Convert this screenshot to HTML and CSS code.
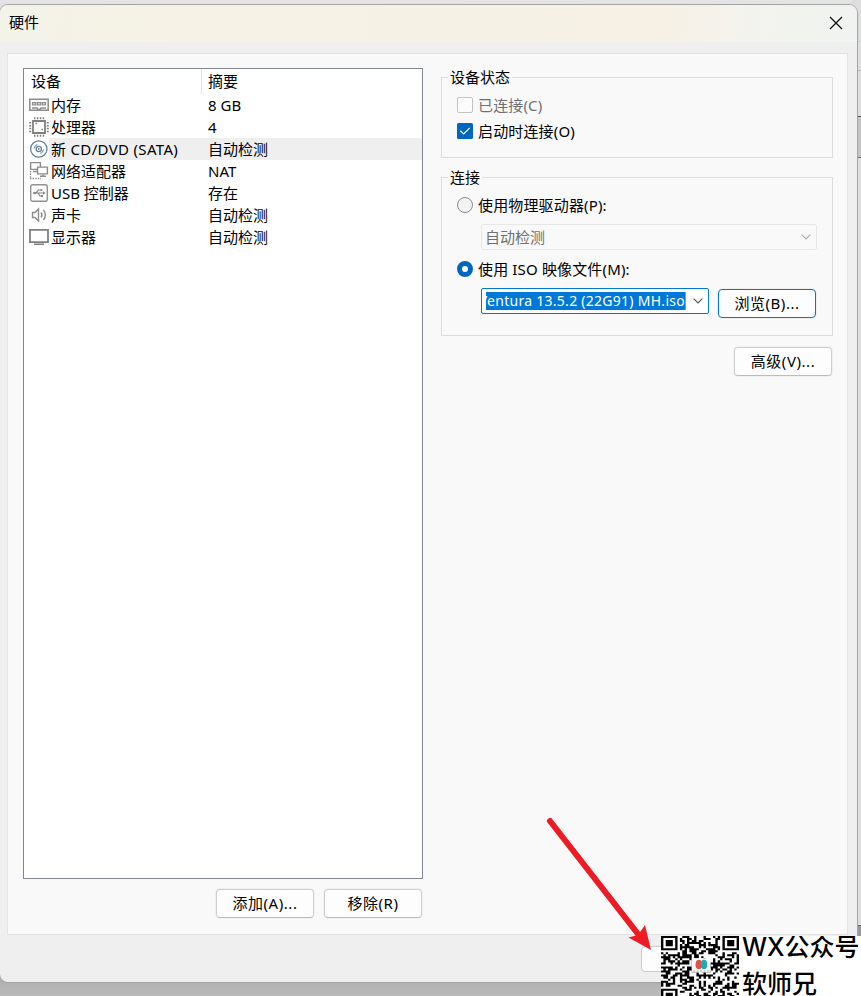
FILE: index.html
```
<!DOCTYPE html>
<html lang="zh-CN">
<head>
<meta charset="utf-8">
<title>硬件</title>
<link rel="stylesheet" href="styles.css">
</head>
<body>
<main class="dialog">
  <header class="titlebar">
    <h1>硬件</h1>
    <svg class="close" width="14" height="14" viewBox="0 0 14 14"><path d="M1 1L13 13M13 1L1 13" stroke="#111" stroke-width="1.3"/></svg>
  </header>
  <section class="panel">
    <div class="left">
      <div class="list">
        <div class="head"><span class="c1">设备</span><span class="c2">摘要</span></div>
        <div class="row"><svg class="ico" width="20" height="22" viewBox="0 0 20 22"><path d="M.8 5.3H19.2V16.2H.8ZM3 14H8L9 15.5H11L12 14H17" fill="none" stroke="#8c8c8c" stroke-width="1.5"/><path d="M3.5 8.5H6.7V11H3.5ZM8.4 8.5H11.6V11H8.4ZM13.3 8.5H16.5V11H13.3Z" fill="#ccc" stroke="#8c8c8c" stroke-width="1.2"/></svg><span class="name">内存</span><span class="val">8 GB</span></div>
        <div class="row"><svg class="ico" width="20" height="22" viewBox="0 0 20 22"><path d="M4 5H16V17H4Z" fill="none" stroke="#808080" stroke-width="1.8"/><path d="M5 2.2H16M5 19.8H16" stroke="#808080" stroke-width="2" stroke-dasharray="1.5 1.4"/><path d="M1.2 6V17M18.8 6V17" stroke="#808080" stroke-width="2" stroke-dasharray="1.5 1.4"/><path d="M6.5 7.5H8M12.5 13.500H14" stroke="#808080" stroke-width="1.5"/></svg><span class="name">处理器</span><span class="val">4</span></div>
        <div class="row selected"><svg class="ico" width="20" height="22" viewBox="0 0 20 22"><g fill="none" stroke="#64839d" stroke-width="1.3"><circle cx="9.800" cy="11" r="8.200"/><circle cx="9.800" cy="11" r="2.600"/><path d="M5.200 10.500A4.800 4.800 0 0 1 8.500 6.500M14.400 11.500A4.800 4.800 0 0 1 11.100 15.500" stroke="#7c9eb9"/></g><circle cx="9.800" cy="11" r=".9" fill="#64839d"/></svg><span class="name wide">新 CD/DVD (SATA)</span><span class="val">自动检测</span></div>
        <div class="row"><svg class="ico" width="20" height="22" viewBox="0 0 20 22"><g fill="#fff" stroke="#8c8c8c" stroke-width="1.4"><path d="M1.600 2.600H11.400V9.400H1.600Z"/><path d="M4 11.500H8M11 16.200H17M14 14.500V16"/><path d="M8.600 7.100H18.400V13.900H8.600Z"/><path d="M1.500 11V17.500M1 18.500H12" stroke-dasharray="1.4 1.2"/></g></svg><span class="name">网络适配器</span><span class="val">NAT</span></div>
        <div class="row"><svg class="ico" width="20" height="22" viewBox="0 0 20 22"><rect x="1.700" y="2.700" width="16.600" height="16.600" rx="2" fill="none" stroke="#929292" stroke-width="1.4"/><path d="M4.500 11H15.500M7 11L9.500 8H12M9 11L11 14H13" fill="none" stroke="#858585" stroke-width="1.2"/><circle cx="5.500" cy="11" r="1.300" fill="#858585"/><path d="M14 9.200L16.500 11L14 12.800Z" fill="#858585"/><circle cx="12.500" cy="8" r="1" fill="#858585"/><path d="M12 13H14V15H12Z" fill="#858585"/></svg><span class="name">USB 控制器</span><span class="val">存在</span></div>
        <div class="row"><svg class="ico" width="20" height="22" viewBox="0 0 20 22"><path d="M3.500 8.500H6L9.500 5V17L6 13.500H3.500ZM12 8.500Q14 11 12 13.500M14.500 6Q18.200 11 14.500 16" fill="none" stroke="#8c8c8c" stroke-width="1.4"/></svg><span class="name">声卡</span><span class="val">自动检测</span></div>
        <div class="row"><svg class="ico" width="20" height="22" viewBox="0 0 20 22"><path d="M1 3.800H19V16.200H1Z" fill="none" stroke="#808080" stroke-width="1.8"/><path d="M5 18.300H15" stroke="#808080" stroke-width="1.6"/></svg><span class="name">显示器</span><span class="val">自动检测</span></div>
      </div>
      <div class="actions"><button>添加(A)...</button><button>移除(R)</button></div>
    </div>
    <div class="right">
      <fieldset class="status">
        <legend>设备状态</legend>
        <label class="opt disabled"><span class="box"></span>已连接(C)</label>
        <label class="opt"><svg width="16" height="16" viewBox="0 0 16 16"><rect width="16" height="16" rx="1.500" fill="#0067c0"/><path d="M3.300 7.800L6.700 11L12.700 4.900" fill="none" stroke="#fff" stroke-width="1.200"/></svg>启动时连接(O)</label>
      </fieldset>
      <fieldset class="connection">
        <legend>连接</legend>
        <label class="opt"><span class="radio"></span>使用物理驱动器(P):</label>
        <div class="combo off"><span>自动检测</span><svg width="10" height="6" viewBox="0 0 10 6"><path d="M.6 .6L5 5L9.400 .6" fill="none" stroke="#aaa" stroke-width="1.100"/></svg></div>
        <label class="opt second"><span class="radio on"></span>使用 ISO 映像文件(M):</label>
        <div class="file">
          <div class="combo on"><span class="clip"><span class="path">Ventura 13.5.2 (22G91) MH.iso</span></span><svg width="10" height="6" viewBox="0 0 10 6"><path d="M.6 .6L5 5L9.400 .6" fill="none" stroke="#555" stroke-width="1.100"/></svg></div>
          <button class="focus">浏览(B)...</button>
        </div>
      </fieldset>
      <button class="advanced">高级(V)...</button>
    </div>
  </section>
  <footer><span class="covered"></span></footer>
</main>
<svg class="arrow" width="120" height="150" viewBox="540 810 120 150"><path d="M550 821L638 934" stroke="#ed1c24" stroke-width="6" stroke-linecap="round"/><path d="M651 950L628.500 937.500L638 935L645 925Z" fill="#ed1c24"/></svg>
<aside class="badge">
  <svg class="qr" width="78" height="67" viewBox="0 0 33 33" preserveAspectRatio="none"><path id="modules" fill="#000"/><rect x="13" y="11" width="8" height="7" fill="#fff"/><ellipse cx="16" cy="14" rx="1.400" ry="2.300" fill="#e85145"/><ellipse cx="18.200" cy="14" rx="1.400" ry="2.300" fill="#23aab5"/><path d="M13.500 17.200H20.500" stroke="#aaa" stroke-width=".5" stroke-dasharray="1 .5"/></svg>
  <div class="words"><div>WX公众号</div><div>软师兄</div></div>
</aside>
<script src="qr.js"></script>
</body>
</html>
```
FILE: styles.css
```
* { box-sizing: border-box; }
body {
  margin: 0; width: 861px; height: 996px; overflow: hidden; padding-top: 4px;
  font: 15px/20px "Noto Sans", "Noto Sans CJK SC", sans-serif; color: #000;
  background:
    linear-gradient(#e5e5e5, #d9d9d9) 0 0 / 852px 12px no-repeat,
    linear-gradient(#adadad, #bababa) 0 975px / 861px 21px no-repeat,
    linear-gradient(transparent 41px, #ccc 41px, #ccc 42px, transparent 42px, transparent 70px, #bbb 70px, #bbb 71px, transparent 71px, transparent 116px, #555 116px, #555 117px, #c4c4c4 117px, #c4c4c4 157px, #527c8c 157px, #527c8c 158px, transparent 158px, transparent 925px, #527c8c 925px, #527c8c 926px, #999 926px),
    #dedede;
}
.dialog {
  display: flex; flex-direction: column; width: 859px; height: 979px; margin-left: -1px;
  border: 1px solid #a5a5a5; border-radius: 9px; overflow: hidden; background: #efefef;
}
.titlebar {
  height: 37px; flex: none; display: flex; align-items: center; justify-content: space-between; padding: 0 14px 1px 9px;
  background: linear-gradient(100deg, #f3f3e9 0%, #f6f2e6 17%, #f7f1e5 77%, #f3f3ee 87%, #f0f3f1 100%);
}
h1 { margin: 0; padding-bottom: 2px; font-size: 15px; font-weight: 400; line-height: 20px; }
.panel {
  flex: none; display: flex; gap: 18px; width: 841px; height: 882px; margin: 11px 0 0 7px;
  padding: 14px 0 0 15px; border: 1px solid #e3e3e3; background: #f9f9f9;
}
.left { width: 400px; }
.list { height: 811px; border: 1px solid #828790; background: #fff; }
.head, .row { display: flex; align-items: center; }
.head { height: 25px; align-items: stretch; line-height: 25px; }
.c1 { width: 178px; padding-left: 7px; border-right: 1px solid #e3e3e3; }
.c2 { padding-left: 6px; }
.row { height: 22px; padding-left: 5px; white-space: nowrap; }
.selected { background: linear-gradient(90deg, #fff 25px, #efefef 25px); }
.ico { flex: none; }
.name { width: 157px; padding-left: 2px; }
.wide { letter-spacing: .33px; }
.val { padding-left: 2px; }
button {
  width: 98px; height: 29px; padding: 0 0 2px; border: 1px solid #cfcfcf; border-bottom-color: #bcbcbc; border-radius: 4px;
  background: #fdfdfd; font: inherit; letter-spacing: .55px; color: #000; box-shadow: 0 0 0 1px #f0f0f0;
}
.actions { display: flex; justify-content: flex-end; gap: 10px; padding: 10px 1px 0 0; }
.right { width: 392px; display: flex; flex-direction: column; margin-top: -1px; }
fieldset { min-width: 0; margin: 0; border: 1px solid #dcdcdc; padding: 0 15px; }
legend { height: 20px; margin-left: -9px; padding: 0 2px; }
.status { height: 91px; }
.connection { height: 169px; margin-top: 9px; }
.opt { display: flex; align-items: center; gap: 5px; height: 26px; white-space: nowrap; letter-spacing: .15px; }
.status .opt:first-of-type { margin-top: 5px; }
.connection .opt { margin-top: 5px; }
.connection .second { margin-top: 6px; }
.disabled { color: #707070; }
.box { width: 16px; height: 16px; border: 1px solid #c3c3c3; border-radius: 2px; background: #fbfbfb; }
.radio { width: 16px; height: 16px; border: 1px solid #8b8b8b; border-radius: 50%; background: #f3f3f3; }
.radio.on { border: 5px solid #0067c0; background: #fff; }
.combo { height: 26px; display: flex; align-items: center; justify-content: space-between; padding: 0 5px 0 3px; border: 1px solid #e7e7e7; border-radius: 2px; }
.off { margin: 6px 0 0 24px; color: #707070; }
.file { display: flex; justify-content: space-between; margin: 6px 1px 0 24px; }
.combo.on { width: 228px; background: #fff; border-color: #0078d4; padding: 0 5px 0 4px; }
.clip { display: flex; justify-content: flex-end; width: 200px; height: 18px; overflow: hidden; background: #0078d7; color: #fff; border-right: 1px solid #e28728; }
.path { flex: none; line-height: 17px; font-size: 14px; letter-spacing: .27px; white-space: nowrap; }
button.focus { margin-top: 1px; border-color: #0078d4; }
.advanced { align-self: flex-end; margin: 11px 1px 0 0; }
footer { display: flex; padding: 11px 0 0 641px; }
.covered { width: 98px; height: 26px; border: 1px solid #ccc; border-radius: 4px; background: #fdfdfd; }
.arrow { position: absolute; left: 540px; top: 810px; }
.badge { position: absolute; left: 661px; top: 936px; width: 200px; height: 60px; overflow: hidden; display: flex; background: #fff; }
.qr { flex: none; }
.words { padding-left: 3px; font: 500 25px/37px "Inter", "Noto Sans CJK SC", sans-serif; white-space: nowrap; margin-top: -7px; }
```
FILE: qr.js
```
const size = 33;
let seed = 7321;
let path = "";
const corners = [[0, 0], [size - 7, 0], [0, size - 7]];
for (let y = 0; y < size; y++) {
  for (let x = 0; x < size; x++) {
    seed = (seed * 1103515245 + 12345) % 2147483648;
    let dark = (seed / 2147483648) > 0.49;
    for (const [cx, cy] of corners) {
      const d = Math.max(Math.abs(x - cx - 3), Math.abs(y - cy - 3));
      if (d <= 4) dark = d === 3 || d <= 1;
    }
    if (dark) path += `M${x} ${y}h1v1h-1z`;
  }
}
document.getElementById("modules").setAttribute("d", path);
```
